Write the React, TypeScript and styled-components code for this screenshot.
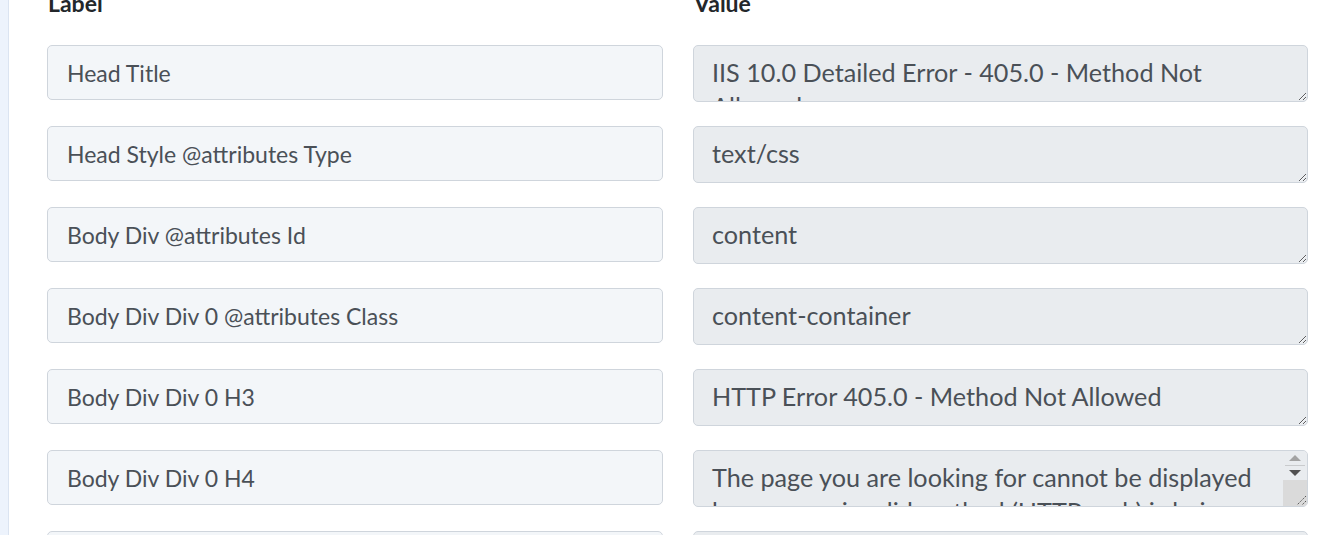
import { useLayoutEffect, useRef, Fragment } from "react";
import styled, { createGlobalStyle } from "styled-components";

interface Row {
  label: string;
  value: string;
  scroll?: boolean;
}

const rows: Row[] = [
  { label: "Head Title", value: "IIS 10.0 Detailed Error - 405.0 - Method Not Allowed" },
  { label: "Head Style @attributes Type", value: "text/css" },
  { label: "Body Div @attributes Id", value: "content" },
  { label: "Body Div Div 0 @attributes Class", value: "content-container" },
  { label: "Body Div Div 0 H3", value: "HTTP Error 405.0 - Method Not Allowed" },
  {
    label: "Body Div Div 0 H4",
    value:
      "The page you are looking for cannot be displayed because an invalid method (HTTP verb) is being used.",
    scroll: true,
  },
  { label: "Body Div Div 1 @attributes Class", value: "content-container" },
  { label: "Body Div Div 1 Fieldset H4", value: "Most likely causes:" },
  {
    label: "Body Div Div 1 Fieldset Ul Li 0",
    value: "The request sent to the Web server used an HTTP verb that is not allowed by the module configured to handle the request.",
  },
  { label: "Body Div Div 1 Fieldset Ul Li 1", value: "A request was sent to the server that contained an invalid HTTP verb." },
  { label: "Body Div Div 2 @attributes Class", value: "content-container" },
  { label: "Body Div Div 2 Fieldset H4", value: "Things you can try:" },
  { label: "Body Div Div 2 Fieldset Ul Li 0", value: "Verify the list of verbs enabled for the module handler this request was sent to." },
  { label: "Body Div Div 2 Fieldset Ul Li 1", value: "Verify that the request was sent to the proper server." },
  { label: "Body Div Div 3 @attributes Class", value: "content-container" },
  { label: "Body Div Div 3 Fieldset H4", value: "Detailed Error Information:" },
  { label: "Body Div Div 3 Fieldset Div Table Tr 0 Th", value: "Module" },
  { label: "Body Div Div 3 Fieldset Div Table Tr 0 Td", value: "StaticFileModule" },
  { label: "Body Div Div 3 Fieldset Div Table Tr 1 Th", value: "Notification" },
  { label: "Body Div Div 3 Fieldset Div Table Tr 1 Td", value: "ExecuteRequestHandler" },
  { label: "Body Div Div 3 Fieldset Div Table Tr 2 Th", value: "Handler" },
  { label: "Body Div Div 3 Fieldset Div Table Tr 2 Td", value: "StaticFile" },
  { label: "Body Div Div 3 Fieldset Div Table Tr 3 Th", value: "Error Code" },
  { label: "Body Div Div 3 Fieldset Div Table Tr 3 Td", value: "0x80070001" },
  { label: "Body Div Div 4 @attributes Class", value: "content-container" },
];

const GlobalStyle = createGlobalStyle`
  html, body {
    margin: 0;
    height: 100%;
    overflow: hidden;
    background: #edf3fc;
  }
`;

const Scroller = styled.div`
  height: 100vh;
  overflow-y: scroll;
  font-family: Lato, "Noto Sans", sans-serif;

  &::-webkit-scrollbar {
    width: 12px;
  }

  &::-webkit-scrollbar-track {
    background: #edf3fc;
  }

  &::-webkit-scrollbar-thumb {
    background: #6c737c;
    border-radius: 0 0 6px 6px;
  }
`;

const Panel = styled.div`
  margin-left: 8px;
  padding: 12px 12px 40px 38px;
  background: #ffffff;
  border-left: 1px solid #dbe4f1;
`;

const Header = styled.div`
  display: grid;
  grid-template-columns: 616px 615px;
  column-gap: 30px;
  margin-bottom: 28px;
`;

const HeaderCell = styled.div`
  font-size: 23px;
  line-height: 28px;
  font-weight: 700;
  color: #23272b;
  padding-left: 1px;
`;

const Grid = styled.div`
  display: grid;
  grid-template-columns: 616px 615px;
  column-gap: 30px;
  row-gap: 24px;
  align-items: start;
`;

const LabelInput = styled.input`
  box-sizing: border-box;
  width: 100%;
  height: 55px;
  margin: 0;
  padding: 0 19px;
  border: 1px solid #cfd5dc;
  border-radius: 5px;
  background: #f3f6f9;
  color: #4a5057;
  font-family: Lato, "Noto Sans", sans-serif;
  font-size: 23px;
  outline: none;
`;

const ValueBox = styled.div`
  position: relative;
  height: 57px;
`;

const ValueArea = styled.textarea`
  box-sizing: border-box;
  display: block;
  width: 100%;
  height: 57px;
  margin: 0;
  padding: 9px 24px 0 18px;
  border: 1px solid #cfd5dc;
  border-radius: 5px;
  background: #e9ecef;
  color: #4a5057;
  font-family: Lato, "Noto Sans", sans-serif;
  font-size: 25.2px;
  line-height: 34px;
  overflow: hidden;
  outline: none;
`;

/* classic scrollbar drawn over a textarea whose text runs past its height */
const ScrollStrip = styled.div`
  position: absolute;
  top: 1px;
  right: 1px;
  bottom: 1px;
  width: 24px;
  display: flex;
  flex-direction: column;
  border-radius: 0 4px 4px 0;
  overflow: hidden;
  background: #e9ecef;
`;

const ArrowButton = styled.div<{ $up?: boolean }>`
  height: 14px;
  display: flex;
  align-items: center;
  justify-content: center;
  border-bottom: ${(p) => (p.$up ? "1px solid #c9cbcd" : "none")};
  margin: 0 2px;
`;

const Arrow = styled.span<{ $up?: boolean; $dim?: boolean }>`
  width: 0;
  height: 0;
  border-left: 6px solid transparent;
  border-right: 6px solid transparent;
  ${(p) =>
    p.$up
      ? `border-bottom: 6px solid ${p.$dim ? "#a3a3a3" : "#505050"};`
      : `border-top: 6px solid ${p.$dim ? "#a3a3a3" : "#505050"};`}
`;

const Thumb = styled.div`
  flex: 1;
  background: #dadada;
  display: flex;
  align-items: flex-end;
  justify-content: flex-end;
`;

function Grip() {
  return (
    <svg width="14" height="14" viewBox="0 0 14 14">
      <path d="M13 4 L4 13 M13 9 L9 13" stroke="#555" strokeWidth="1" strokeDasharray="1.5 1" />
    </svg>
  );
}

function ValueField({ row }: { row: Row }) {
  return (
    <ValueBox>
      <ValueArea readOnly value={row.value} />
      {row.scroll && (
        <ScrollStrip>
          <ArrowButton $up>
            <Arrow $up $dim />
          </ArrowButton>
          <ArrowButton>
            <Arrow />
          </ArrowButton>
          <Thumb>
            <Grip />
          </Thumb>
        </ScrollStrip>
      )}
    </ValueBox>
  );
}

export default function App() {
  const scroller = useRef<HTMLDivElement>(null);

  useLayoutEffect(() => {
    if (scroller.current) scroller.current.scrollTop = 23;
  }, []);

  return (
    <>
      <GlobalStyle />
      <Scroller ref={scroller}>
        <Panel>
          <Header>
            <HeaderCell>Label</HeaderCell>
            <HeaderCell>Value</HeaderCell>
          </Header>
          <Grid>
            {rows.map((row) => (
              <Fragment key={row.label}>
                <LabelInput readOnly value={row.label} />
                <ValueField row={row} />
              </Fragment>
            ))}
          </Grid>
        </Panel>
      </Scroller>
    </>
  );
}
